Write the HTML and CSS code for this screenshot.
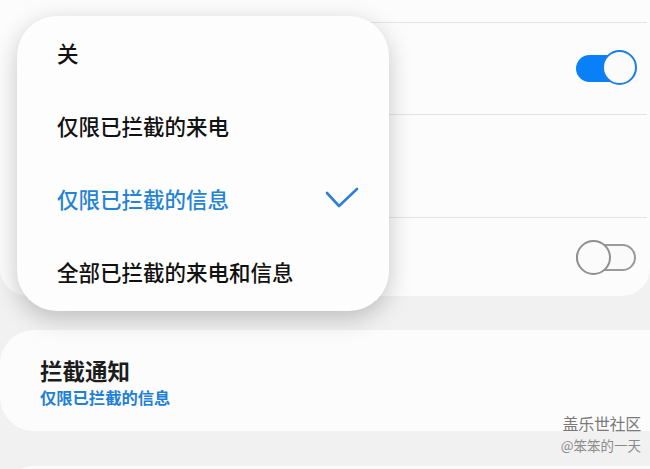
FILE: index.html
```html
<!DOCTYPE html>
<html lang="zh-CN">
<head>
    <meta charset="UTF-8">
    <meta name="viewport" content="width=device-width, initial-scale=1.0">
    <title>拦截设置</title>
    <link rel="stylesheet" href="styles.css">
</head>
<body>
    <div class="screen">
        <!-- Settings card behind the popup -->
        <div class="card card-top">
            <div class="row row-head"></div>
            <div class="row row-a">
                <span class="switch on"><span class="knob"></span></span>
            </div>
            <div class="row row-b"></div>
            <div class="row row-c">
                <span class="switch off"><span class="knob"></span></span>
            </div>
        </div>

        <div class="card card-notify">
            <div class="title">拦截通知</div>
            <div class="summary">仅限已拦截的信息</div>
        </div>

        <div class="card card-next"></div>

        <!-- Dropdown menu -->
        <ul class="menu">
            <li class="option">关</li>
            <li class="option">仅限已拦截的来电</li>
            <li class="option selected">
                仅限已拦截的信息
                <svg class="check" width="34" height="24" viewBox="0 0 34 24">
                    <polyline points="2,6 14,19 32,2" fill="none" stroke="#2f80d3" stroke-width="2.6" stroke-linecap="round" stroke-linejoin="round"/>
                </svg>
            </li>
            <li class="option">全部已拦截的来电和信息</li>
        </ul>

        <div class="watermark">
            <div class="wm-site">盖乐世社区</div>
            <div class="wm-user">@笨笨的一天</div>
        </div>
    </div>
</body>
</html>
```

FILE: styles.css
```css
body {
    margin: 0;
    font-family: "Noto Sans CJK SC", "Noto Sans", sans-serif;
    background-color: #f1f1f1;
}

.screen {
    position: relative;
    width: 650px;
    height: 469px;
    overflow: hidden;
}

.card {
    background-color: #fcfcfc;
}

.card-top {
    border-radius: 0 0 28px 28px;
}

.row {
    display: flex;
    align-items: center;
    justify-content: flex-end;
    padding-right: 11px;
    margin-left: 40px;
    margin-right: 3px;
    border-top: 1px solid #e4e4e4;
}

.row-head {
    height: 22px;
    border-top: none;
}

.row-a {
    height: 91px;
}

.row-b {
    height: 102px;
}

.row-c {
    height: 78px;
}

.switch {
    position: relative;
    display: block;
    width: 60px;
    height: 27px;
    border-radius: 14px;
    box-sizing: border-box;
}

.switch .knob {
    position: absolute;
    top: -5px;
    width: 35px;
    height: 35px;
    border-radius: 50%;
    box-sizing: border-box;
    background-color: #fbfbfb;
}

.switch.on {
    background-color: #0a80f8;
}

.switch.on .knob {
    right: -1px;
    border: 2px solid #1a7fe6;
}

.switch.off {
    border: 2px solid #9a9a9a;
    background-color: #fafafa;
}

.switch.off .knob {
    left: -2px;
    top: -6px;
    border: 2px solid #909090;
}

.card-notify {
    margin-top: 34px;
    height: 101px;
    border-radius: 34px 0 0 34px;
    padding-left: 40px;
    display: flex;
    flex-direction: column;
    justify-content: center;
}

.title {
    font-size: 22.5px;
    font-weight: 700;
    color: #1c1c1c;
    line-height: 28px;
    margin-top: 3px;
}

.summary {
    font-size: 16.3px;
    font-weight: 700;
    color: #1f7fd4;
    line-height: 22px;
    margin-top: 2px;
}

.card-next {
    margin-top: 35px;
    height: 40px;
    border-radius: 34px 0 0 0;
}

.menu {
    position: absolute;
    left: 17px;
    top: 16px;
    width: 372px;
    height: 295px;
    margin: 0;
    padding: 20px 0 0;
    list-style: none;
    box-sizing: border-box;
    background-color: #fdfdfd;
    border-radius: 40px;
    box-shadow: 0 7px 24px rgba(0, 0, 0, 0.22);
}

.option {
    display: flex;
    align-items: center;
    justify-content: space-between;
    height: 73px;
    margin-top: -20px;
    margin-bottom: 20px;
    padding: 0 30px 0 40px;
    font-size: 21.5px;
    font-weight: 500;
    color: #111;
}

.option.selected {
    color: #2383d6;
}

.check {
    display: block;
    margin-top: 0;
}

.watermark {
    position: absolute;
    right: 9px;
    top: 411px;
    text-align: right;
    color: #7a7a7a;
}

.wm-site {
    font-size: 16px;
    line-height: 24px;
    letter-spacing: -0.3px;
}

.wm-user {
    font-size: 13.5px;
    line-height: 20px;
    color: #8a8a8a;
}
```
